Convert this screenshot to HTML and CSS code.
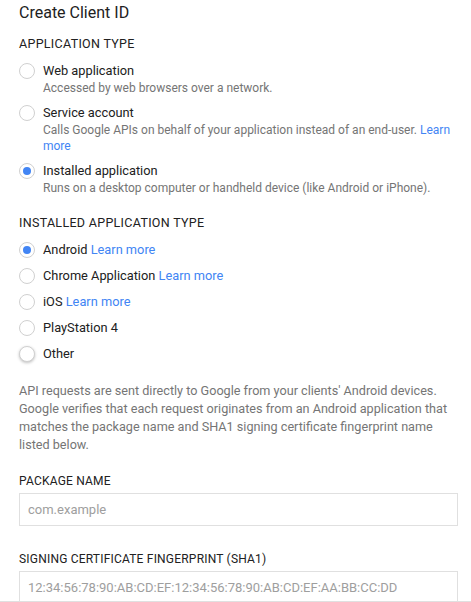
FILE: index.html
```html
<!DOCTYPE html>
<html>
<head>
<meta charset="utf-8">
<link rel="stylesheet" href="styles.css">
</head>
<body>
<div class="page">
  <h1 class="title">Create Client ID</h1>

  <div class="section-label">APPLICATION TYPE</div>
  <div class="options">
    <div class="option">
      <span class="radio"></span>
      <div class="option-body">
        <div class="option-label">Web application</div>
        <div class="option-desc">Accessed by web browsers over a network.</div>
      </div>
    </div>
    <div class="option">
      <span class="radio"></span>
      <div class="option-body">
        <div class="option-label">Service account</div>
        <div class="option-desc">Calls Google APIs on behalf of your application instead of an end-user. <a class="link">Learn more</a></div>
      </div>
    </div>
    <div class="option">
      <span class="radio checked"></span>
      <div class="option-body">
        <div class="option-label">Installed application</div>
        <div class="option-desc">Runs on a desktop computer or handheld device (like Android or iPhone).</div>
      </div>
    </div>
  </div>

  <div class="section-label section-label--second">INSTALLED APPLICATION TYPE</div>
  <div class="options">
    <div class="option">
      <span class="radio checked"></span>
      <div class="option-body"><div class="option-label">Android <a class="link">Learn more</a></div></div>
    </div>
    <div class="option">
      <span class="radio"></span>
      <div class="option-body"><div class="option-label">Chrome Application <a class="link">Learn more</a></div></div>
    </div>
    <div class="option">
      <span class="radio"></span>
      <div class="option-body"><div class="option-label">iOS <a class="link">Learn more</a></div></div>
    </div>
    <div class="option">
      <span class="radio"></span>
      <div class="option-body"><div class="option-label">PlayStation 4</div></div>
    </div>
    <div class="option">
      <span class="radio focused"></span>
      <div class="option-body"><div class="option-label">Other</div></div>
    </div>
  </div>

  <p class="info">API requests are sent directly to Google from your clients' Android devices. Google verifies that each request originates from an Android application that matches the package name and SHA1 signing certificate fingerprint name listed below.</p>

  <div class="field">
    <div class="field-label">PACKAGE NAME</div>
    <div class="input"><span class="placeholder">com.example</span></div>
  </div>
  <div class="field">
    <div class="field-label">SIGNING CERTIFICATE FINGERPRINT (SHA1)</div>
    <div class="input"><span class="placeholder">12:34:56:78:90:AB:CD:EF:12:34:56:78:90:AB:CD:EF:AA:BB:CC:DD</span></div>
  </div>
</div>
</body>
</html>
```
FILE: styles.css
```css
html, body {
  margin: 0;
  padding: 0;
  background: #fff;
}
body {
  font-family: Roboto, "Liberation Sans", sans-serif;
  color: #212121;
  height: 602px;
  overflow: hidden;
  position: relative;
}
body::after {
  content: "";
  position: absolute;
  left: 0;
  right: 0;
  top: 601px;
  height: 1px;
  background: #e0e0e0;
}
.page {
  padding: 1px 13px 0 19px;
}
.title {
  margin: 0;
  font-size: 16px;
  font-weight: 400;
  line-height: 24px;
  color: #212121;
}
.section-label {
  margin-top: 11px;
  font-size: 12.5px;
  line-height: 16px;
  letter-spacing: 0.3px;
  color: #212121;
}
.section-label--second {
  margin-top: 19px;
}
.options {
  display: flex;
  flex-direction: column;
  gap: 8px;
  margin-top: 10px;
}
.option {
  display: flex;
  align-items: flex-start;
  gap: 8px;
}
.radio {
  flex: none;
  box-sizing: border-box;
  width: 16px;
  height: 16px;
  margin-top: 1px;
  border: 1px solid #d0d0d0;
  border-radius: 50%;
  background: #fff;
  position: relative;
}
.radio.checked::after {
  content: "";
  position: absolute;
  left: 3px;
  top: 3px;
  width: 8px;
  height: 8px;
  border-radius: 50%;
  background: #4285f4;
}
.radio.focused {
  box-shadow: 0 1px 3px rgba(0, 0, 0, 0.25);
}
.option-body {
  min-width: 0;
}
.option-label {
  font-size: 12.8px;
  line-height: 18px;
  color: #212121;
}
.option-desc {
  font-size: 12px;
  line-height: 16px;
  color: #757575;
}
.link {
  color: #4285f4;
  text-decoration: none;
}
.info {
  margin: 19px 0 0;
  font-size: 12.65px;
  line-height: 18px;
  color: #757575;
}
.field {
  margin-top: 19px;
}
.field + .field {
  margin-top: 25px;
}
.field-label {
  font-size: 12px;
  line-height: 16px;
  letter-spacing: 0.2px;
  color: #212121;
}
.input {
  margin-top: 4px;
  box-sizing: border-box;
  height: 33px;
  border: 1px solid #e0e0e0;
  padding: 0 8px;
  display: flex;
  align-items: center;
}
.placeholder {
  font-size: 13px;
  color: #9e9e9e;
}
```
